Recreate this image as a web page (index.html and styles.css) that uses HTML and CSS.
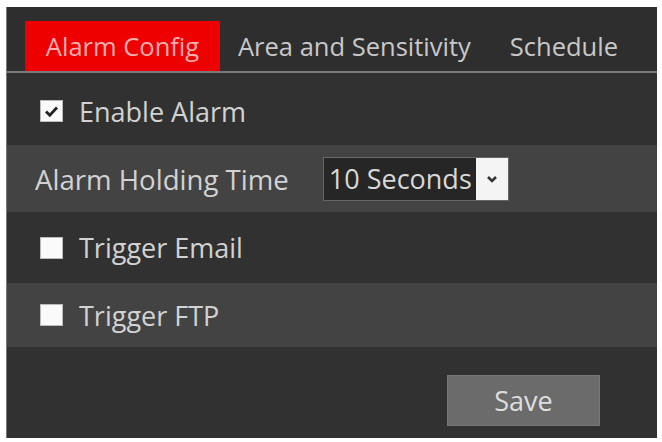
FILE: index.html
```html
<!DOCTYPE html>
<html>
<head>
<meta charset="utf-8">
<link rel="stylesheet" href="styles.css">
</head>
<body>
<div class="panel">
  <div class="tabs">
    <div class="tab active">Alarm Config</div>
    <div class="tab tab-area">Area and Sensitivity</div>
    <div class="tab tab-sched">Schedule</div>
  </div>
  <div class="row row-enable">
    <span class="check checked">
      <svg width="15" height="13" viewBox="0 0 15 13"><path d="M2 6.5 L5.8 10.2 L13 2.5" fill="none" stroke="#222" stroke-width="2.8"/></svg>
    </span>
    <span class="label">Enable Alarm</span>
  </div>
  <div class="row row-hold alt">
    <span class="label plain">Alarm Holding Time</span>
    <div class="select">
      <span class="select-text">10 Seconds</span>
      <span class="select-arrow">
        <svg width="12" height="8" viewBox="0 0 12 8"><path d="M2 2 L6 6 L10 2" fill="none" stroke="#333" stroke-width="2.6"/></svg>
      </span>
    </div>
  </div>
  <div class="row row-email">
    <span class="check"></span>
    <span class="label">Trigger Email</span>
  </div>
  <div class="row row-ftp alt">
    <span class="check"></span>
    <span class="label">Trigger FTP</span>
  </div>
  <div class="footer">
    <button class="save">Save</button>
  </div>
</div>
</body>
</html>
```
FILE: styles.css
```css
* { box-sizing: border-box; }
html, body { margin: 0; padding: 0; background: #ffffff; }
body {
  font-family: "Open Sans", "Noto Sans", sans-serif;
  color: #cfcfcf;
}
.panel {
  margin: 7px 0 0 6px;
  width: 651px;
  height: 431px;
  background: #313131;
  border-left: 1px solid #777;
  display: flex;
  flex-direction: column;
}
.tabs {
  height: 66px;
  padding: 14px 0 0 18px;
  display: flex;
  align-items: flex-start;
  background: #2e2e2e;
  border-bottom: 2px solid #7a7a7a;
}
.tab {
  height: 50px;
  display: flex;
  align-items: center;
  font-size: 25.5px;
  color: #c8c8c8;
  white-space: nowrap;
}
.tab.active {
  width: 195px;
  justify-content: center;
  background: #ee0000;
  color: #f2b0b0;
}
.tab-area { margin-left: 18px; }
.tab-sched { margin-left: 39px; }
.row {
  display: flex;
  align-items: center;
  padding-left: 33px;
}
.alt { background: #434343; }
.row-enable { height: 72px; padding-top: 4px; }
.row-hold { height: 67px; padding-left: 28px; }
.row-email { height: 71px; }
.row-ftp { height: 64px; }
.check {
  width: 23px;
  height: 22px;
  background: #fafafa;
  border: 1px solid #bbb;
  display: flex;
  align-items: center;
  justify-content: center;
}
.label {
  margin-left: 16px;
  font-size: 27px;
  color: #d2d2d2;
  white-space: nowrap;
}
.label.plain { margin-left: 0; font-size: 27.6px; }
.select {
  margin-left: 34px;
  width: 186px;
  height: 44px;
  display: flex;
  border: 1px solid #666;
  background: #262626;
}
.select-text {
  flex: 1;
  display: flex;
  align-items: center;
  padding-left: 5px;
  font-size: 27px;
  color: #d8d8d8;
  white-space: nowrap;
}
.select-arrow {
  width: 32px;
  background: #f4f4f4;
  display: flex;
  align-items: center;
  justify-content: center;
}
.footer {
  flex: 1;
  display: flex;
  justify-content: flex-end;
  align-items: flex-start;
  padding: 28px 57px 0 0;
}
.save {
  width: 153px;
  height: 51px;
  background: #6b6b6b;
  border: 1px solid #777;
  color: #dedede;
  font-family: "Open Sans", "Noto Sans", sans-serif;
  font-size: 27px;
  padding: 0;
}
```
